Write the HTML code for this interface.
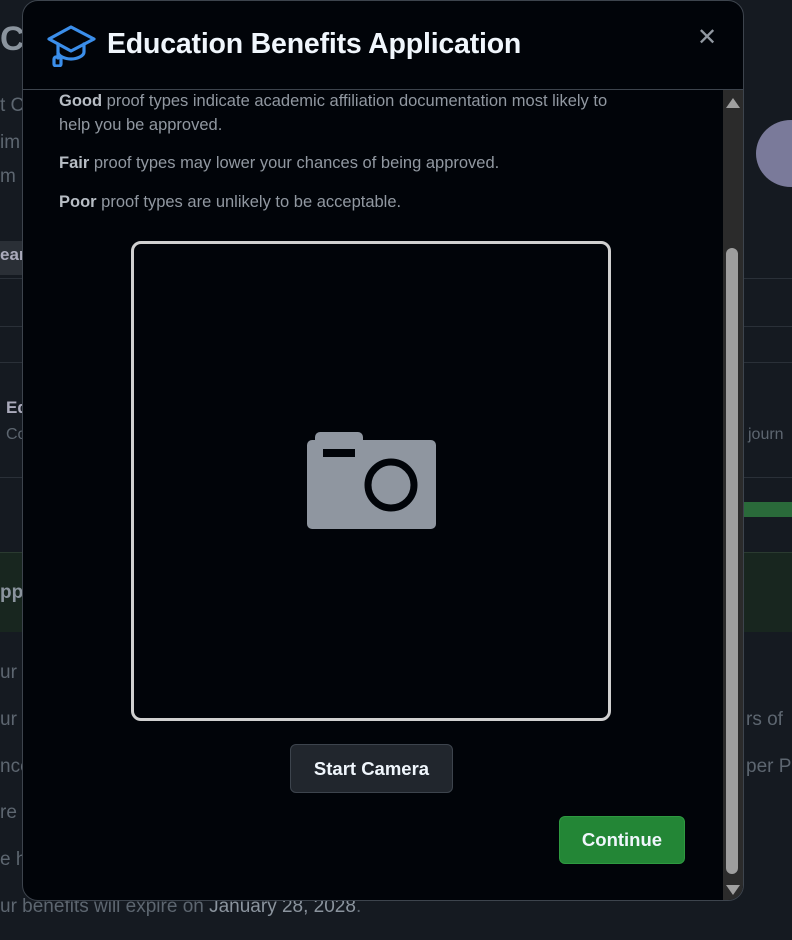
<!DOCTYPE html>
<html><head><meta charset="utf-8"><style>
*{margin:0;padding:0;box-sizing:border-box}
body{width:792px;height:940px;overflow:hidden;background:#151a21;font-family:"Liberation Sans",sans-serif;position:relative;color:#6e7681}
.bg{position:absolute;font-size:19px;color:#5d6670}
.ln{position:absolute;left:0;right:0;height:1px;background:#2a3038}
.modal{position:absolute;left:22px;top:0;width:722px;height:901px;background:#010409;border:1px solid #3d444d;border-radius:16px;overflow:hidden}
.hdr{position:absolute;left:0;top:0;right:0;height:89px;border-bottom:1px solid #3d444d}
.title{position:absolute;left:84px;top:27px;font-size:28.5px;font-weight:bold;color:#f0f6fc;letter-spacing:-0.2px}
.x{position:absolute;left:674px;top:22px;font-size:24px;color:#9198a1}
.p{position:absolute;left:36px;font-size:16.5px;color:#9198a1;line-height:24px;width:575px}
.p b{color:#b7bdc4}
.sb{position:absolute;left:700px;top:89px;width:21px;bottom:0;background:#2b2b2b}
.thumb{position:absolute;left:3px;top:158px;width:12px;height:626px;background:#9e9e9e;border-radius:6px}
.box{position:absolute;left:108px;top:240px;width:480px;height:480px;border:3px solid #d0d0d0;border-radius:10px}
.btn{position:absolute;font-weight:bold;color:#f0f6fc;font-size:19px;display:flex;align-items:center;justify-content:center;border-radius:6px}
</style></head><body>
<div class="ln" style="top:278px"></div><div class="ln" style="top:326px"></div><div class="ln" style="top:362px"></div><div class="ln" style="top:477px"></div>
<div style="position:absolute;left:0;top:552px;width:792px;height:80px;background:#18261f;border-top:1px solid #2a3a30"></div>
<div style="position:absolute;left:744px;top:502px;width:48px;height:15px;background:#2a6a3a"></div>
<div style="position:absolute;left:756px;top:120px;width:70px;height:67px;border-radius:50%;background:#7a7a9a"></div>
<div style="position:absolute;left:0;top:241px;width:22px;height:34px;background:#2a2f36"></div>
<div class="bg" style="left:0;top:20px;font-size:34px;font-weight:bold;color:#8b949e">CU</div>
<div class="bg" style="left:0;top:95px">t C</div><div class="bg" style="left:0;top:132px">im</div><div class="bg" style="left:0;top:166px">m</div>
<div class="bg" style="left:0;top:245px;color:#aab;font-weight:bold;font-size:17px">ear</div>
<div class="bg" style="left:6px;top:398px;font-weight:bold;color:#aab;font-size:17px">Ed</div>
<div class="bg" style="left:6px;top:426px;font-size:16px">Co</div>
<div class="bg" style="left:748px;top:426px;font-size:16px">journ</div>
<div class="bg" style="left:0;top:582px;font-weight:bold;color:#8b949e">ppr</div>
<div class="bg" style="left:0;top:662px">ur</div><div class="bg" style="left:0;top:709px">ur</div><div class="bg" style="left:746px;top:709px">rs of</div>
<div class="bg" style="left:0;top:756px">nce</div><div class="bg" style="left:746px;top:756px">per P</div>
<div class="bg" style="left:0;top:802px">re</div><div class="bg" style="left:0;top:849px">e h</div>
<div class="bg" style="left:0;top:896px">ur benefits will expire on <b style="color:#8b949e;font-weight:normal">January 28, 2028</b>.</div>
<div class="modal">
 <div class="hdr">
  <svg style="position:absolute;left:24px;top:24px" width="50" height="42" viewBox="0 0 50 42" fill="none" stroke="#3b8eea" stroke-width="3.2" stroke-linejoin="round" stroke-linecap="round"><path d="M24 2 L47 14 L24 26 L2 14 Z"/><path d="M11 19 V27 C11 31 18 34 24 34 C30 34 37 31 37 27 V19"/><path d="M11 28 V33"/><rect x="7" y="32" width="7" height="9" rx="2"/></svg>
  <div class="title">Education Benefits Application</div>
  <div class="x">✕</div>
 </div>
 <div class="p" style="top:88px"><b>Good</b> proof types indicate academic affiliation documentation most likely to help you be approved.</div>
 <div class="p" style="top:150px"><b>Fair</b> proof types may lower your chances of being approved.</div>
 <div class="p" style="top:189px"><b>Poor</b> proof types are unlikely to be acceptable.</div>
 <div class="box"></div>
 <svg style="position:absolute;left:284px;top:431px" width="130" height="98" viewBox="0 0 130 98"><rect x="8" y="0" width="48" height="14" rx="5" fill="#8f96a0"/><rect x="0" y="8" width="129" height="89" rx="5" fill="#8f96a0"/><rect x="16" y="17" width="32" height="8" fill="#010409"/><circle cx="84" cy="53" r="23" fill="none" stroke="#010409" stroke-width="7"/></svg>
 <div class="btn" style="left:267px;top:743px;width:163px;height:49px;background:#21262d;border:1px solid #3d444d;font-size:18.5px">Start Camera</div>
 <div class="btn" style="left:536px;top:815px;width:126px;height:48px;background:#238636;border:1px solid #2e9a40;font-size:18.5px">Continue</div>
 <div class="sb"><div style="position:absolute;left:3px;top:8px;border-left:7px solid transparent;border-right:7px solid transparent;border-bottom:10px solid #a0a0a0"></div><div class="thumb"></div><div style="position:absolute;left:3px;top:795px;border-left:7px solid transparent;border-right:7px solid transparent;border-top:10px solid #a0a0a0"></div></div>
</div>
</body></html>
